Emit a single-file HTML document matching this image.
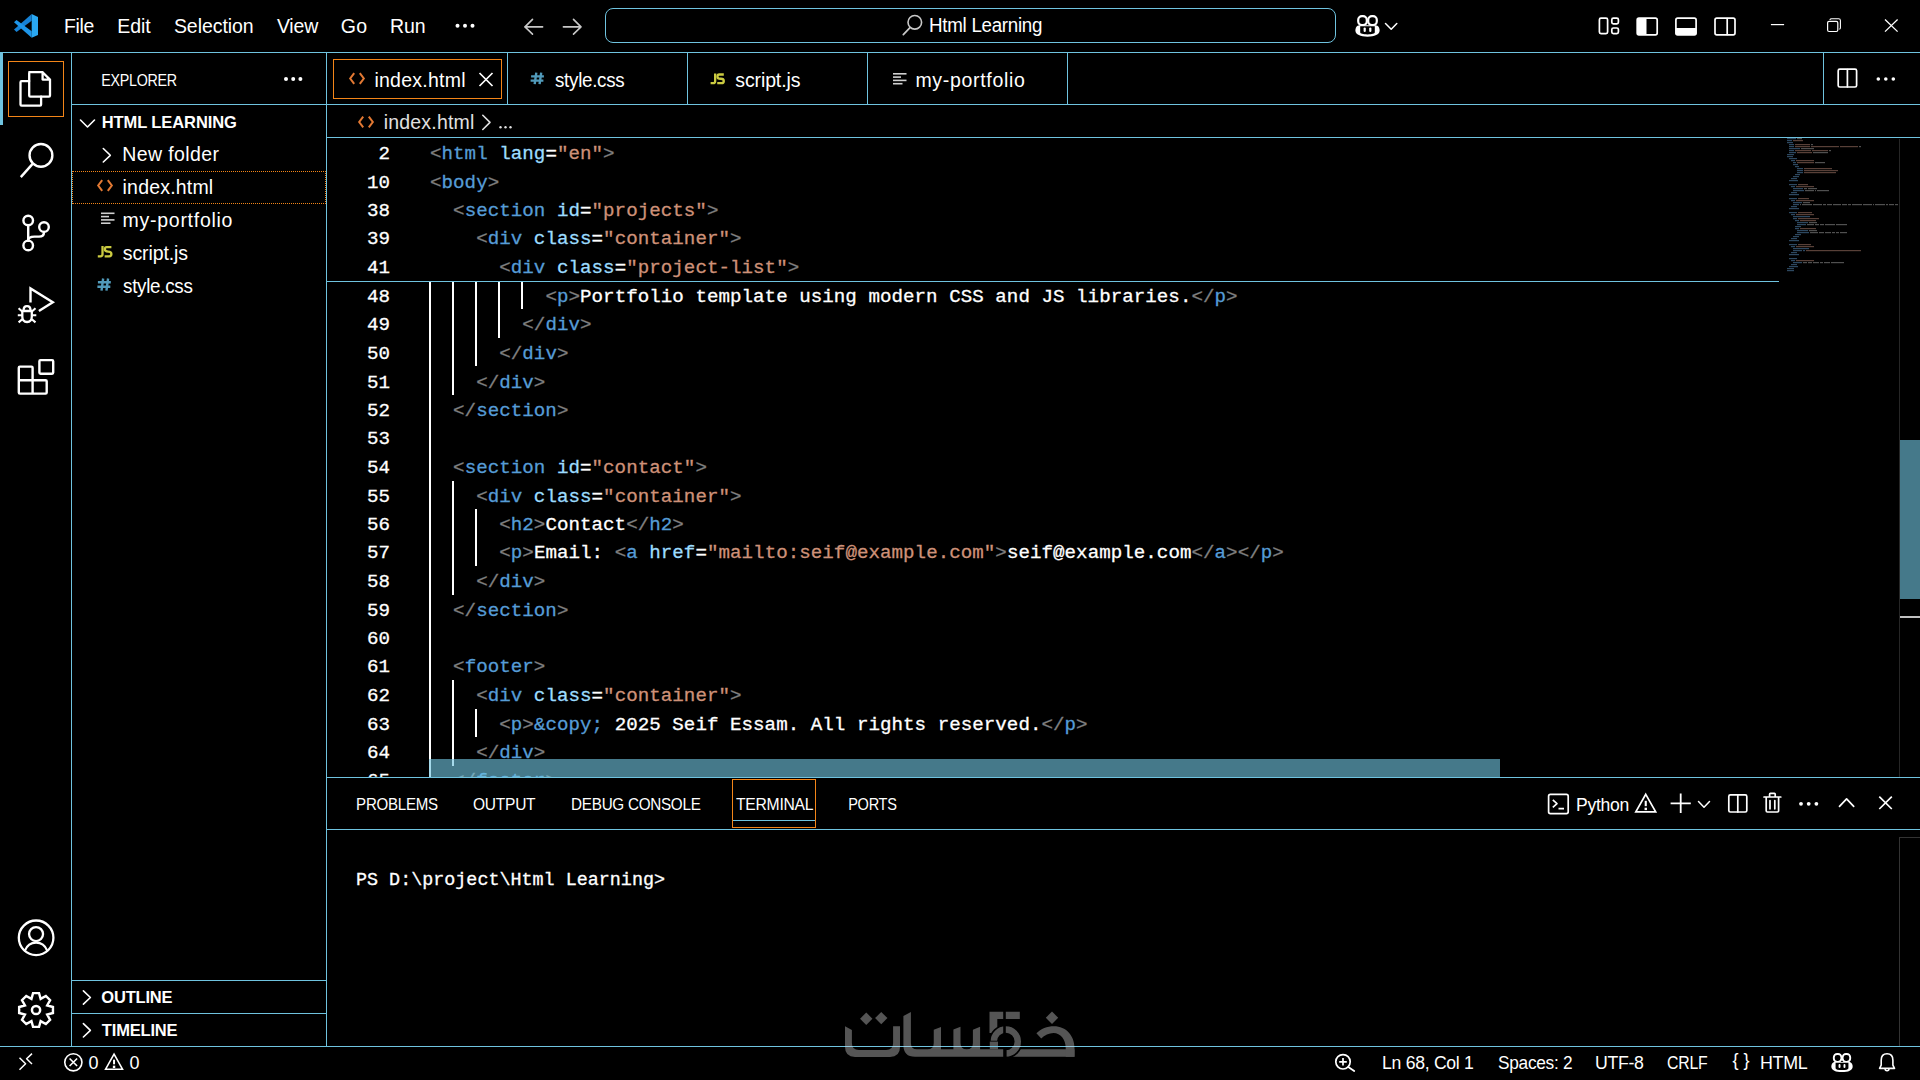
<!DOCTYPE html>
<html><head><meta charset="utf-8"><style>
html,body{margin:0;padding:0;background:#000;width:1920px;height:1080px;overflow:hidden;position:relative}
</style></head><body>
<div style="position:absolute;left:0px;top:52px;width:1920px;height:1px;background:#6FC3DF"></div><div style="position:absolute;left:64.00px;top:17px;font:400 19.5px/19.5px 'Liberation Sans', sans-serif;color:#fff;letter-spacing:-0.300px;white-space:pre;transform:scaleX(0.9944);transform-origin:1.60px 0;">File</div><div style="position:absolute;left:117.15px;top:17px;font:400 19.5px/19.5px 'Liberation Sans', sans-serif;color:#fff;letter-spacing:-0.004px;white-space:pre;">Edit</div><div style="position:absolute;left:173.90px;top:17px;font:400 19.5px/19.5px 'Liberation Sans', sans-serif;color:#fff;letter-spacing:-0.057px;white-space:pre;">Selection</div><div style="position:absolute;left:276.90px;top:17px;font:400 19.5px/19.5px 'Liberation Sans', sans-serif;color:#fff;letter-spacing:-0.182px;white-space:pre;">View</div><div style="position:absolute;left:340.82px;top:17px;font:400 19.5px/19.5px 'Liberation Sans', sans-serif;color:#fff;letter-spacing:0.381px;white-space:pre;">Go</div><div style="position:absolute;left:390.00px;top:17px;font:400 19.5px/19.5px 'Liberation Sans', sans-serif;color:#fff;letter-spacing:-0.098px;white-space:pre;">Run</div><div style="position:absolute;left:605px;top:8px;width:731px;height:35px;border:1px solid #6FC3DF;border-radius:8px;box-sizing:border-box"></div><div style="position:absolute;left:929.30px;top:16px;font:400 19.5px/19.5px 'Liberation Sans', sans-serif;color:#fff;letter-spacing:-0.300px;white-space:pre;transform:scaleX(0.9622);transform-origin:1.60px 0;">Html Learning</div><div style="position:absolute;left:71px;top:53px;width:1px;height:993px;background:#6FC3DF"></div><div style="position:absolute;left:0px;top:52px;width:3px;height:73px;background:#6FC3DF"></div><div style="position:absolute;left:8px;top:61px;width:56px;height:56px;border:1px solid #F38518;box-sizing:border-box"></div><div style="position:absolute;left:326px;top:53px;width:1px;height:993px;background:#6FC3DF"></div><div style="position:absolute;left:101.45px;top:72px;font:400 16.5px/16.5px 'Liberation Sans', sans-serif;color:#fff;letter-spacing:-0.300px;white-space:pre;transform:scaleX(0.8653);transform-origin:1.35px 0;">EXPLORER</div><div style="position:absolute;left:72px;top:104px;width:254px;height:1px;background:#6FC3DF"></div><div style="position:absolute;left:101.69px;top:114px;font:700 16.5px/16.5px 'Liberation Sans', sans-serif;color:#fff;letter-spacing:-0.087px;white-space:pre;">HTML LEARNING</div><div style="position:absolute;left:122.30px;top:145px;font:400 19.5px/19.5px 'Liberation Sans', sans-serif;color:#fff;letter-spacing:0.380px;white-space:pre;">New folder</div><div style="position:absolute;left:72px;top:171px;width:254px;height:33px;border:1px dotted #F38518;box-sizing:border-box"></div><div style="position:absolute;left:122.59px;top:178px;font:400 19.5px/19.5px 'Liberation Sans', sans-serif;color:#fff;letter-spacing:0.195px;white-space:pre;">index.html</div><div style="position:absolute;left:122.61px;top:211px;font:400 19.5px/19.5px 'Liberation Sans', sans-serif;color:#fff;letter-spacing:0.722px;white-space:pre;">my-portfolio</div><div style="position:absolute;left:122.85px;top:244px;font:400 19.5px/19.5px 'Liberation Sans', sans-serif;color:#fff;letter-spacing:-0.117px;white-space:pre;">script.js</div><div style="position:absolute;left:122.85px;top:277px;font:400 19.5px/19.5px 'Liberation Sans', sans-serif;color:#fff;letter-spacing:-0.300px;white-space:pre;transform:scaleX(0.9646);transform-origin:0.55px 0;">style.css</div><div style="position:absolute;left:72px;top:980px;width:254px;height:1px;background:#6FC3DF"></div><div style="position:absolute;left:101.32px;top:989px;font:700 16.5px/16.5px 'Liberation Sans', sans-serif;color:#fff;letter-spacing:-0.200px;white-space:pre;">OUTLINE</div><div style="position:absolute;left:72px;top:1013px;width:254px;height:1px;background:#6FC3DF"></div><div style="position:absolute;left:101.82px;top:1022px;font:700 16.5px/16.5px 'Liberation Sans', sans-serif;color:#fff;letter-spacing:-0.169px;white-space:pre;">TIMELINE</div><div style="position:absolute;left:0px;top:1046px;width:1920px;height:1px;background:#6FC3DF"></div><div style="position:absolute;left:327px;top:104px;width:1593px;height:1px;background:#6FC3DF"></div><div style="position:absolute;left:507px;top:53px;width:1px;height:51px;background:#6FC3DF"></div><div style="position:absolute;left:687px;top:53px;width:1px;height:51px;background:#6FC3DF"></div><div style="position:absolute;left:867px;top:53px;width:1px;height:51px;background:#6FC3DF"></div><div style="position:absolute;left:1067px;top:53px;width:1px;height:51px;background:#6FC3DF"></div><div style="position:absolute;left:1823px;top:53px;width:1px;height:51px;background:#6FC3DF"></div><div style="position:absolute;left:333px;top:59px;width:169px;height:40px;border:1px solid #F38518;box-sizing:border-box"></div><div style="position:absolute;left:374.39px;top:71px;font:400 19.5px/19.5px 'Liberation Sans', sans-serif;color:#fff;letter-spacing:0.261px;white-space:pre;">index.html</div><div style="position:absolute;left:555.35px;top:71px;font:400 19.5px/19.5px 'Liberation Sans', sans-serif;color:#fff;letter-spacing:-0.300px;white-space:pre;transform:scaleX(0.9632);transform-origin:0.55px 0;">style.css</div><div style="position:absolute;left:735.35px;top:71px;font:400 19.5px/19.5px 'Liberation Sans', sans-serif;color:#fff;letter-spacing:-0.130px;white-space:pre;">script.js</div><div style="position:absolute;left:915.41px;top:71px;font:400 19.5px/19.5px 'Liberation Sans', sans-serif;color:#fff;letter-spacing:0.685px;white-space:pre;">my-portfolio</div><div style="position:absolute;left:327px;top:137px;width:1593px;height:1px;background:#6FC3DF"></div><div style="position:absolute;left:383.69px;top:113px;font:400 19.5px/19.5px 'Liberation Sans', sans-serif;color:#e0e0e0;letter-spacing:0.195px;white-space:pre;">index.html</div><div style="position:absolute;left:378.46px;top:145px;font:400 19.17px/19.17px 'Liberation Mono', monospace;color:#fff;letter-spacing:0.000px;white-space:pre;-webkit-text-stroke:0.3px currentColor;">2</div><div style="position:absolute;left:430.00px;top:145px;font:400 19.17px/19.17px 'Liberation Mono', monospace;color:#fff;letter-spacing:0.040px;white-space:pre;-webkit-text-stroke:0.3px currentColor;"><span style="color:#808080">&lt;</span><span style="color:#569CD6">html</span><span style="color:#FFFFFF"> </span><span style="color:#9CDCFE">lang</span><span style="color:#FFFFFF">=</span><span style="color:#CE9178">&quot;en&quot;</span><span style="color:#808080">&gt;</span></div><div style="position:absolute;left:366.92px;top:174px;font:400 19.17px/19.17px 'Liberation Mono', monospace;color:#fff;letter-spacing:0.000px;white-space:pre;-webkit-text-stroke:0.3px currentColor;">10</div><div style="position:absolute;left:430.00px;top:174px;font:400 19.17px/19.17px 'Liberation Mono', monospace;color:#fff;letter-spacing:0.040px;white-space:pre;-webkit-text-stroke:0.3px currentColor;"><span style="color:#808080">&lt;</span><span style="color:#569CD6">body</span><span style="color:#808080">&gt;</span></div><div style="position:absolute;left:366.92px;top:202px;font:400 19.17px/19.17px 'Liberation Mono', monospace;color:#fff;letter-spacing:0.000px;white-space:pre;-webkit-text-stroke:0.3px currentColor;">38</div><div style="position:absolute;left:453.08px;top:202px;font:400 19.17px/19.17px 'Liberation Mono', monospace;color:#fff;letter-spacing:0.040px;white-space:pre;-webkit-text-stroke:0.3px currentColor;"><span style="color:#808080">&lt;</span><span style="color:#569CD6">section</span><span style="color:#FFFFFF"> </span><span style="color:#9CDCFE">id</span><span style="color:#FFFFFF">=</span><span style="color:#CE9178">&quot;projects&quot;</span><span style="color:#808080">&gt;</span></div><div style="position:absolute;left:366.92px;top:230px;font:400 19.17px/19.17px 'Liberation Mono', monospace;color:#fff;letter-spacing:0.000px;white-space:pre;-webkit-text-stroke:0.3px currentColor;">39</div><div style="position:absolute;left:476.16px;top:230px;font:400 19.17px/19.17px 'Liberation Mono', monospace;color:#fff;letter-spacing:0.040px;white-space:pre;-webkit-text-stroke:0.3px currentColor;"><span style="color:#808080">&lt;</span><span style="color:#569CD6">div</span><span style="color:#FFFFFF"> </span><span style="color:#9CDCFE">class</span><span style="color:#FFFFFF">=</span><span style="color:#CE9178">&quot;container&quot;</span><span style="color:#808080">&gt;</span></div><div style="position:absolute;left:366.92px;top:259px;font:400 19.17px/19.17px 'Liberation Mono', monospace;color:#fff;letter-spacing:0.000px;white-space:pre;-webkit-text-stroke:0.3px currentColor;">41</div><div style="position:absolute;left:499.24px;top:259px;font:400 19.17px/19.17px 'Liberation Mono', monospace;color:#fff;letter-spacing:0.040px;white-space:pre;-webkit-text-stroke:0.3px currentColor;"><span style="color:#808080">&lt;</span><span style="color:#569CD6">div</span><span style="color:#FFFFFF"> </span><span style="color:#9CDCFE">class</span><span style="color:#FFFFFF">=</span><span style="color:#CE9178">&quot;project-list&quot;</span><span style="color:#808080">&gt;</span></div><div style="position:absolute;left:327px;top:281px;width:1452px;height:1px;background:#6FC3DF"></div><div style="position:absolute;left:0;top:282px;width:1920px;height:495px;overflow:hidden"><div style="position:absolute;left:0;top:-282px;width:1920px;height:1080px"><div style="position:absolute;left:366.92px;top:288px;font:400 19.17px/19.17px 'Liberation Mono', monospace;color:#fff;letter-spacing:0.000px;white-space:pre;-webkit-text-stroke:0.3px currentColor;">48</div><div style="position:absolute;left:545.40px;top:288px;font:400 19.17px/19.17px 'Liberation Mono', monospace;color:#fff;letter-spacing:0.040px;white-space:pre;-webkit-text-stroke:0.3px currentColor;"><span style="color:#808080">&lt;</span><span style="color:#569CD6">p</span><span style="color:#808080">&gt;</span><span style="color:#FFFFFF">Portfolio template using modern CSS and JS libraries.</span><span style="color:#808080">&lt;/</span><span style="color:#569CD6">p</span><span style="color:#808080">&gt;</span></div><div style="position:absolute;left:366.92px;top:316px;font:400 19.17px/19.17px 'Liberation Mono', monospace;color:#fff;letter-spacing:0.000px;white-space:pre;-webkit-text-stroke:0.3px currentColor;">49</div><div style="position:absolute;left:522.32px;top:316px;font:400 19.17px/19.17px 'Liberation Mono', monospace;color:#fff;letter-spacing:0.040px;white-space:pre;-webkit-text-stroke:0.3px currentColor;"><span style="color:#808080">&lt;/</span><span style="color:#569CD6">div</span><span style="color:#808080">&gt;</span></div><div style="position:absolute;left:366.92px;top:345px;font:400 19.17px/19.17px 'Liberation Mono', monospace;color:#fff;letter-spacing:0.000px;white-space:pre;-webkit-text-stroke:0.3px currentColor;">50</div><div style="position:absolute;left:499.24px;top:345px;font:400 19.17px/19.17px 'Liberation Mono', monospace;color:#fff;letter-spacing:0.040px;white-space:pre;-webkit-text-stroke:0.3px currentColor;"><span style="color:#808080">&lt;/</span><span style="color:#569CD6">div</span><span style="color:#808080">&gt;</span></div><div style="position:absolute;left:366.92px;top:374px;font:400 19.17px/19.17px 'Liberation Mono', monospace;color:#fff;letter-spacing:0.000px;white-space:pre;-webkit-text-stroke:0.3px currentColor;">51</div><div style="position:absolute;left:476.16px;top:374px;font:400 19.17px/19.17px 'Liberation Mono', monospace;color:#fff;letter-spacing:0.040px;white-space:pre;-webkit-text-stroke:0.3px currentColor;"><span style="color:#808080">&lt;/</span><span style="color:#569CD6">div</span><span style="color:#808080">&gt;</span></div><div style="position:absolute;left:366.92px;top:402px;font:400 19.17px/19.17px 'Liberation Mono', monospace;color:#fff;letter-spacing:0.000px;white-space:pre;-webkit-text-stroke:0.3px currentColor;">52</div><div style="position:absolute;left:453.08px;top:402px;font:400 19.17px/19.17px 'Liberation Mono', monospace;color:#fff;letter-spacing:0.040px;white-space:pre;-webkit-text-stroke:0.3px currentColor;"><span style="color:#808080">&lt;/</span><span style="color:#569CD6">section</span><span style="color:#808080">&gt;</span></div><div style="position:absolute;left:366.92px;top:430px;font:400 19.17px/19.17px 'Liberation Mono', monospace;color:#fff;letter-spacing:0.000px;white-space:pre;-webkit-text-stroke:0.3px currentColor;">53</div><div style="position:absolute;left:366.92px;top:459px;font:400 19.17px/19.17px 'Liberation Mono', monospace;color:#fff;letter-spacing:0.000px;white-space:pre;-webkit-text-stroke:0.3px currentColor;">54</div><div style="position:absolute;left:453.08px;top:459px;font:400 19.17px/19.17px 'Liberation Mono', monospace;color:#fff;letter-spacing:0.040px;white-space:pre;-webkit-text-stroke:0.3px currentColor;"><span style="color:#808080">&lt;</span><span style="color:#569CD6">section</span><span style="color:#FFFFFF"> </span><span style="color:#9CDCFE">id</span><span style="color:#FFFFFF">=</span><span style="color:#CE9178">&quot;contact&quot;</span><span style="color:#808080">&gt;</span></div><div style="position:absolute;left:366.92px;top:488px;font:400 19.17px/19.17px 'Liberation Mono', monospace;color:#fff;letter-spacing:0.000px;white-space:pre;-webkit-text-stroke:0.3px currentColor;">55</div><div style="position:absolute;left:476.16px;top:488px;font:400 19.17px/19.17px 'Liberation Mono', monospace;color:#fff;letter-spacing:0.040px;white-space:pre;-webkit-text-stroke:0.3px currentColor;"><span style="color:#808080">&lt;</span><span style="color:#569CD6">div</span><span style="color:#FFFFFF"> </span><span style="color:#9CDCFE">class</span><span style="color:#FFFFFF">=</span><span style="color:#CE9178">&quot;container&quot;</span><span style="color:#808080">&gt;</span></div><div style="position:absolute;left:366.92px;top:516px;font:400 19.17px/19.17px 'Liberation Mono', monospace;color:#fff;letter-spacing:0.000px;white-space:pre;-webkit-text-stroke:0.3px currentColor;">56</div><div style="position:absolute;left:499.24px;top:516px;font:400 19.17px/19.17px 'Liberation Mono', monospace;color:#fff;letter-spacing:0.040px;white-space:pre;-webkit-text-stroke:0.3px currentColor;"><span style="color:#808080">&lt;</span><span style="color:#569CD6">h2</span><span style="color:#808080">&gt;</span><span style="color:#FFFFFF">Contact</span><span style="color:#808080">&lt;/</span><span style="color:#569CD6">h2</span><span style="color:#808080">&gt;</span></div><div style="position:absolute;left:366.92px;top:544px;font:400 19.17px/19.17px 'Liberation Mono', monospace;color:#fff;letter-spacing:0.000px;white-space:pre;-webkit-text-stroke:0.3px currentColor;">57</div><div style="position:absolute;left:499.24px;top:544px;font:400 19.17px/19.17px 'Liberation Mono', monospace;color:#fff;letter-spacing:0.040px;white-space:pre;-webkit-text-stroke:0.3px currentColor;"><span style="color:#808080">&lt;</span><span style="color:#569CD6">p</span><span style="color:#808080">&gt;</span><span style="color:#FFFFFF">Email: </span><span style="color:#808080">&lt;</span><span style="color:#569CD6">a</span><span style="color:#FFFFFF"> </span><span style="color:#9CDCFE">href</span><span style="color:#FFFFFF">=</span><span style="color:#CE9178">&quot;mailto:seif@example.com&quot;</span><span style="color:#808080">&gt;</span><span style="color:#FFFFFF">seif@example.com</span><span style="color:#808080">&lt;/</span><span style="color:#569CD6">a</span><span style="color:#808080">&gt;</span><span style="color:#808080">&lt;/</span><span style="color:#569CD6">p</span><span style="color:#808080">&gt;</span></div><div style="position:absolute;left:366.92px;top:573px;font:400 19.17px/19.17px 'Liberation Mono', monospace;color:#fff;letter-spacing:0.000px;white-space:pre;-webkit-text-stroke:0.3px currentColor;">58</div><div style="position:absolute;left:476.16px;top:573px;font:400 19.17px/19.17px 'Liberation Mono', monospace;color:#fff;letter-spacing:0.040px;white-space:pre;-webkit-text-stroke:0.3px currentColor;"><span style="color:#808080">&lt;/</span><span style="color:#569CD6">div</span><span style="color:#808080">&gt;</span></div><div style="position:absolute;left:366.92px;top:602px;font:400 19.17px/19.17px 'Liberation Mono', monospace;color:#fff;letter-spacing:0.000px;white-space:pre;-webkit-text-stroke:0.3px currentColor;">59</div><div style="position:absolute;left:453.08px;top:602px;font:400 19.17px/19.17px 'Liberation Mono', monospace;color:#fff;letter-spacing:0.040px;white-space:pre;-webkit-text-stroke:0.3px currentColor;"><span style="color:#808080">&lt;/</span><span style="color:#569CD6">section</span><span style="color:#808080">&gt;</span></div><div style="position:absolute;left:366.92px;top:630px;font:400 19.17px/19.17px 'Liberation Mono', monospace;color:#fff;letter-spacing:0.000px;white-space:pre;-webkit-text-stroke:0.3px currentColor;">60</div><div style="position:absolute;left:366.92px;top:658px;font:400 19.17px/19.17px 'Liberation Mono', monospace;color:#fff;letter-spacing:0.000px;white-space:pre;-webkit-text-stroke:0.3px currentColor;">61</div><div style="position:absolute;left:453.08px;top:658px;font:400 19.17px/19.17px 'Liberation Mono', monospace;color:#fff;letter-spacing:0.040px;white-space:pre;-webkit-text-stroke:0.3px currentColor;"><span style="color:#808080">&lt;</span><span style="color:#569CD6">footer</span><span style="color:#808080">&gt;</span></div><div style="position:absolute;left:366.92px;top:687px;font:400 19.17px/19.17px 'Liberation Mono', monospace;color:#fff;letter-spacing:0.000px;white-space:pre;-webkit-text-stroke:0.3px currentColor;">62</div><div style="position:absolute;left:476.16px;top:687px;font:400 19.17px/19.17px 'Liberation Mono', monospace;color:#fff;letter-spacing:0.040px;white-space:pre;-webkit-text-stroke:0.3px currentColor;"><span style="color:#808080">&lt;</span><span style="color:#569CD6">div</span><span style="color:#FFFFFF"> </span><span style="color:#9CDCFE">class</span><span style="color:#FFFFFF">=</span><span style="color:#CE9178">&quot;container&quot;</span><span style="color:#808080">&gt;</span></div><div style="position:absolute;left:366.92px;top:716px;font:400 19.17px/19.17px 'Liberation Mono', monospace;color:#fff;letter-spacing:0.000px;white-space:pre;-webkit-text-stroke:0.3px currentColor;">63</div><div style="position:absolute;left:499.24px;top:716px;font:400 19.17px/19.17px 'Liberation Mono', monospace;color:#fff;letter-spacing:0.040px;white-space:pre;-webkit-text-stroke:0.3px currentColor;"><span style="color:#808080">&lt;</span><span style="color:#569CD6">p</span><span style="color:#808080">&gt;</span><span style="color:#569CD6">&amp;copy;</span><span style="color:#FFFFFF"> 2025 Seif Essam. All rights reserved.</span><span style="color:#808080">&lt;/</span><span style="color:#569CD6">p</span><span style="color:#808080">&gt;</span></div><div style="position:absolute;left:366.92px;top:744px;font:400 19.17px/19.17px 'Liberation Mono', monospace;color:#fff;letter-spacing:0.000px;white-space:pre;-webkit-text-stroke:0.3px currentColor;">64</div><div style="position:absolute;left:476.16px;top:744px;font:400 19.17px/19.17px 'Liberation Mono', monospace;color:#fff;letter-spacing:0.040px;white-space:pre;-webkit-text-stroke:0.3px currentColor;"><span style="color:#808080">&lt;/</span><span style="color:#569CD6">div</span><span style="color:#808080">&gt;</span></div><div style="position:absolute;left:366.92px;top:772px;font:400 19.17px/19.17px 'Liberation Mono', monospace;color:#fff;letter-spacing:0.000px;white-space:pre;-webkit-text-stroke:0.3px currentColor;">65</div><div style="position:absolute;left:453.08px;top:772px;font:400 19.17px/19.17px 'Liberation Mono', monospace;color:#fff;letter-spacing:0.040px;white-space:pre;-webkit-text-stroke:0.3px currentColor;"><span style="color:#808080">&lt;/</span><span style="color:#569CD6">footer</span><span style="color:#808080">&gt;</span></div><div style="position:absolute;left:429.25px;top:282px;width:1.5px;height:495px;background:#fff"></div><div style="position:absolute;left:452.25px;top:282px;width:1.5px;height:113px;background:#fff"></div><div style="position:absolute;left:475.25px;top:282px;width:1.5px;height:84px;background:#fff"></div><div style="position:absolute;left:498.25px;top:282px;width:1.5px;height:56px;background:#fff"></div><div style="position:absolute;left:521.25px;top:282px;width:1.5px;height:27px;background:#fff"></div><div style="position:absolute;left:452.25px;top:481px;width:1.5px;height:114px;background:#fff"></div><div style="position:absolute;left:475.25px;top:509px;width:1.5px;height:57px;background:#fff"></div><div style="position:absolute;left:452.25px;top:680px;width:1.5px;height:86px;background:#fff"></div><div style="position:absolute;left:475.25px;top:709px;width:1.5px;height:28px;background:#fff"></div></div></div><div style="position:absolute;left:429px;top:759px;width:1071px;height:18px;background:rgba(111,195,223,0.62)"></div><div style="position:absolute;left:1899px;top:440px;width:21px;height:159px;background:rgba(111,195,223,0.62)"></div><div style="position:absolute;left:1900px;top:616px;width:20px;height:2px;background:#c0c0c0"></div><div style="position:absolute;left:1899px;top:139px;width:1px;height:638px;background:#262626"></div><div style="position:absolute;left:1899px;top:837px;width:1px;height:209px;background:#333333"></div><div style="position:absolute;left:1899px;top:837px;width:21px;height:1px;background:#333333"></div><div style="position:absolute;left:327px;top:777px;width:1593px;height:1px;background:#6FC3DF"></div><div style="position:absolute;left:356.15px;top:796px;font:400 16.5px/16.5px 'Liberation Sans', sans-serif;color:#fff;letter-spacing:-0.300px;white-space:pre;transform:scaleX(0.9145);transform-origin:1.35px 0;">PROBLEMS</div><div style="position:absolute;left:472.97px;top:796px;font:400 16.5px/16.5px 'Liberation Sans', sans-serif;color:#fff;letter-spacing:-0.300px;white-space:pre;transform:scaleX(0.9428);transform-origin:0.78px 0;">OUTPUT</div><div style="position:absolute;left:570.55px;top:796px;font:400 16.5px/16.5px 'Liberation Sans', sans-serif;color:#fff;letter-spacing:-0.300px;white-space:pre;transform:scaleX(0.9242);transform-origin:1.35px 0;">DEBUG CONSOLE</div><div style="position:absolute;left:735.54px;top:796px;font:400 16.5px/16.5px 'Liberation Sans', sans-serif;color:#fff;letter-spacing:-0.300px;white-space:pre;transform:scaleX(0.9525);transform-origin:0.36px 0;">TERMINAL</div><div style="position:absolute;left:847.85px;top:796px;font:400 16.5px/16.5px 'Liberation Sans', sans-serif;color:#fff;letter-spacing:-0.300px;white-space:pre;transform:scaleX(0.8810);transform-origin:1.35px 0;">PORTS</div><div style="position:absolute;left:732px;top:779px;width:84px;height:49px;border:1px solid #F38518;box-sizing:border-box"></div><div style="position:absolute;left:733px;top:820px;width:82px;height:1px;background:#6FC3DF"></div><div style="position:absolute;left:327px;top:829px;width:1593px;height:1px;background:#6FC3DF"></div><div style="position:absolute;left:356.00px;top:872px;font:400 18.4px/18.4px 'Liberation Mono', monospace;color:#fff;letter-spacing:0.000px;white-space:pre;-webkit-text-stroke:0.3px currentColor;">PS D:\project\Html Learning&gt;</div><div style="position:absolute;left:1575.52px;top:796px;font:400 18px/18px 'Liberation Sans', sans-serif;color:#fff;letter-spacing:-0.300px;white-space:pre;transform:scaleX(0.9752);transform-origin:1.48px 0;">Python</div><div style="position:absolute;left:1381.52px;top:1054px;font:400 18px/18px 'Liberation Sans', sans-serif;color:#fff;letter-spacing:-0.300px;white-space:pre;transform:scaleX(0.9792);transform-origin:1.48px 0;">Ln 68, Col 1</div><div style="position:absolute;left:1497.92px;top:1054px;font:400 18px/18px 'Liberation Sans', sans-serif;color:#fff;letter-spacing:-0.300px;white-space:pre;transform:scaleX(0.9596);transform-origin:0.83px 0;">Spaces: 2</div><div style="position:absolute;left:1595.21px;top:1054px;font:400 18px/18px 'Liberation Sans', sans-serif;color:#fff;letter-spacing:-0.300px;white-space:pre;transform:scaleX(0.9825);transform-origin:1.39px 0;">UTF-8</div><div style="position:absolute;left:1666.58px;top:1054px;font:400 18px/18px 'Liberation Sans', sans-serif;color:#fff;letter-spacing:-0.300px;white-space:pre;transform:scaleX(0.8791);transform-origin:0.92px 0;">CRLF</div><div style="position:absolute;left:1759.77px;top:1054px;font:400 18px/18px 'Liberation Sans', sans-serif;color:#fff;letter-spacing:-0.300px;white-space:pre;transform:scaleX(0.9918);transform-origin:1.48px 0;">HTML</div><div style="position:absolute;left:88.50px;top:1054px;font:400 18px/18px 'Liberation Sans', sans-serif;color:#fff;letter-spacing:0.000px;white-space:pre;">0</div><div style="position:absolute;left:129.50px;top:1054px;font:400 18px/18px 'Liberation Sans', sans-serif;color:#fff;letter-spacing:0.000px;white-space:pre;">0</div><div style="position:absolute;left:1732.5px;top:1051px;font:400 18px/18px 'Liberation Sans', sans-serif;color:#fff;letter-spacing:5px">{}</div>
<svg style="position:absolute;left:0;top:0" width="1920" height="1080" viewBox="0 0 1920 1080" fill="none" stroke="#fff" stroke-width="2.2" stroke-linecap="round" stroke-linejoin="round">
<circle cx="457.5" cy="25.8" r="2" fill="#fff" stroke="none"/><circle cx="465" cy="25.8" r="2" fill="#fff" stroke="none"/><circle cx="472.5" cy="25.8" r="2" fill="#fff" stroke="none"/><circle cx="286" cy="78.9" r="2" fill="#fff" stroke="none"/><circle cx="293.2" cy="78.9" r="2" fill="#fff" stroke="none"/><circle cx="300.4" cy="78.9" r="2" fill="#fff" stroke="none"/><path d="M31.7 14 L38 17 V35 L31.7 37.8 Z" fill="#2AA8F2" stroke="none" /><path d="M14 29.6 L16.5 31.9 L31.7 20.8 V14 Z" fill="#1681D4" stroke="none" /><path d="M14 22.3 L16.5 20.1 L31.7 31.3 V37.8 Z" fill="#1E95E8" stroke="none" /><path d="M542.6 26.9 H524.8 M532.5 19.4 L525 26.9 L532.5 34.1" stroke="#c8c8c8" stroke-width="1.6" /><path d="M563.4 26.9 H581 M573.5 19.4 L581 26.9 L573.5 34.1" stroke="#c8c8c8" stroke-width="1.6" /><circle cx="914.8" cy="22.3" r="6.8" stroke="#c8c8c8" stroke-width="1.6"/><path d="M910 27.6 L903.3 34.7" stroke="#c8c8c8" stroke-width="1.7" /><rect x="1358.20" y="16.10" width="8.60" height="9.00" rx="3.80" stroke="#fff" stroke-width="2.2"/><rect x="1368.20" y="16.10" width="8.60" height="9.00" rx="3.80" stroke="#fff" stroke-width="2.2"/><path d="M1359.50 25.20 H1375.50 C1378.50 25.20 1379.60 28.00 1379.60 30.50 C1379.60 34.50 1374.50 36.70 1367.50 36.70 C1360.50 36.70 1355.40 34.50 1355.40 30.50 C1355.40 28.00 1356.50 25.20 1359.50 25.20 Z" fill="#fff" stroke="none" /><path d="M1360.20 26.20 H1374.80 V32.30 C1374.80 33.80 1372.00 34.40 1367.50 34.40 C1363.00 34.40 1360.20 33.80 1360.20 32.30 Z" fill="#000" stroke="none" /><rect x="1363.60" y="27.40" width="2.20" height="4.60" rx="1.10" fill="#fff" stroke="none"/><rect x="1369.20" y="27.40" width="2.20" height="4.60" rx="1.10" fill="#fff" stroke="none"/><path d="M1385.5 23.5 L1391.2 29.3 L1396.8 23.5" stroke="#fff" stroke-width="1.5" /><rect x="1599.4" y="18.2" width="8.2" height="15.4" rx="1.6" stroke="#fff" stroke-width="1.7"/><rect x="1611.8" y="18.2" width="6.6" height="5.6" rx="1.6" stroke="#fff" stroke-width="1.7"/><rect x="1611.8" y="28" width="6.6" height="5.6" rx="1.6" stroke="#fff" stroke-width="1.7"/><rect x="1637.2" y="18.2" width="20" height="16.6" rx="1.8" stroke="#fff" stroke-width="1.7"/><path d="M1637 19.5 Q1637 18 1638.5 18 H1646.5 V35 H1638.5 Q1637 35 1637 33.5 Z" fill="#fff" stroke="none" /><rect x="1675.9" y="18.2" width="20.2" height="16.6" rx="1.8" stroke="#fff" stroke-width="1.7"/><path d="M1675.7 28 H1696.3 V33.5 Q1696.3 35 1694.8 35 H1677.2 Q1675.7 35 1675.7 33.5 Z" fill="#fff" stroke="none" /><rect x="1715" y="18.2" width="20" height="16.6" rx="1.8" stroke="#fff" stroke-width="1.7"/><path d="M1727.2 18.5 V34.5" stroke="#fff" stroke-width="1.7" /><path d="M1770.9 24.6 H1784.1" stroke="#fff" stroke-width="1.2" stroke-linecap="butt"/><rect x="1827.6" y="21.3" width="10.2" height="10.2" rx="1.5" stroke="#fff" stroke-width="1.2"/><path d="M1830 19.4 Q1830.3 18.8 1831.5 18.8 H1838.6 Q1840.4 18.8 1840.4 20.6 V27.8 Q1840.4 28.8 1839.8 29.1" stroke="#fff" stroke-width="1.1" /><path d="M1885 19.5 L1897.6 31.6 M1897.6 19.5 L1885 31.6" stroke="#fff" stroke-width="1.3" stroke-linecap="butt"/><path d="M29.2 72.2 H42.6 L50 79.6 V95.6 Q50 96.7 48.9 96.7 H30.3 Q29.2 96.7 29.2 95.6 V73.3 Q29.2 72.2 30.3 72.2 Z M42.6 72.2 V79.6 H50" stroke="#fff" stroke-width="2.3" /><path d="M29.2 81.1 H21.6 Q20.5 81.1 20.5 82.2 V104.5 Q20.5 105.6 21.6 105.6 H40 Q41.1 105.6 41.1 104.5 V96.7" stroke="#fff" stroke-width="2.3" /><circle cx="40.95" cy="155.4" r="11.4" stroke="#fff" stroke-width="2.4"/><path d="M32.6 163.9 L20.8 177.1" stroke="#fff" stroke-width="2.4" stroke-linecap="butt"/><circle cx="28.2" cy="220.5" r="4.8" stroke="#fff" stroke-width="2.4"/><circle cx="44" cy="227.1" r="4.8" stroke="#fff" stroke-width="2.4"/><circle cx="28.2" cy="245.4" r="4.8" stroke="#fff" stroke-width="2.4"/><path d="M28.2 225.3 V240.6" stroke="#fff" stroke-width="2.4" /><path d="M44 231.9 C44 235.3 42 236.6 39 236.6 H34.5 C31 236.6 28.2 238 28.2 240.6" stroke="#fff" stroke-width="2.4" /><path d="M30.5 302.6 V288.4 L52.8 302.2 L38.9 311" stroke="#fff" stroke-width="2.4" stroke-linecap="butt" stroke-linejoin="miter"/><path d="M23.6 310.5 C23.6 307.6 25 306.2 27 306.2 C29 306.2 30.5 307.6 30.5 310.5" stroke="#fff" stroke-width="2.3" /><path d="M22.3 311 H31.8 V316.5 C31.8 320 30 322 27.05 322 C24.1 322 22.3 320 22.3 316.5 Z" stroke="#fff" stroke-width="2.3" /><path d="M18.6 308.3 L22.2 311.6 M35.5 308.3 L31.9 311.6 M17.8 315.2 H22 M32.1 315.2 H36.3 M18.6 322.4 L22.3 319.2 M35.5 322.4 L31.8 319.2" stroke="#fff" stroke-width="2.1" stroke-linecap="butt"/><path d="M18.8 367.7 Q18.8 366.6 19.9 366.6 H31.5 Q32.6 366.6 32.6 367.7 V380.2 H45.6 Q46.7 380.2 46.7 381.3 V392.5 Q46.7 393.6 45.6 393.6 H19.9 Q18.8 393.6 18.8 392.5 Z M18.8 380.2 H32.6 V393.6" stroke="#fff" stroke-width="2.4" /><rect x="39.4" y="360.1" width="13.8" height="13.6" rx="1.1" stroke="#fff" stroke-width="2.4"/><circle cx="36.1" cy="937.8" r="17.3" stroke="#fff" stroke-width="2.3"/><circle cx="36.05" cy="934.1" r="7" stroke="#fff" stroke-width="2.3"/><path d="M24.9 950.6 C27 945.3 31 942.6 36.05 942.6 C41.1 942.6 45.1 945.3 47.2 950.6" stroke="#fff" stroke-width="2.3" /><path d="M31.46 998.91 L33.05 993.10 L39.05 993.10 L40.64 998.91 L45.88 995.93 L50.12 1000.17 L47.14 1005.41 L52.95 1007.00 L52.95 1013.00 L47.14 1014.59 L50.12 1019.83 L45.88 1024.07 L40.64 1021.09 L39.05 1026.90 L33.05 1026.90 L31.46 1021.09 L26.22 1024.07 L21.98 1019.83 L24.96 1014.59 L19.15 1013.00 L19.15 1007.00 L24.96 1005.41 L21.98 1000.17 L26.22 995.93 Z" stroke="#fff" stroke-width="2.4" stroke-linejoin="miter"/><circle cx="36.05" cy="1010.0" r="4.1" stroke="#fff" stroke-width="2.5"/><path d="M80.5 120 L87.5 127 L94.5 120" stroke="#fff" stroke-width="1.6" /><path d="M103.3 148.5 L110.3 155.3 L103.3 162" stroke="#fff" stroke-width="1.6" /><path d="M83.4 990.8 L90.4 997.5 L83.4 1004.2" stroke="#fff" stroke-width="1.6" /><path d="M83.4 1023.6 L90.4 1030.3 L83.4 1037" stroke="#fff" stroke-width="1.6" /><path d="M102.2 180.2 L98.2 185.5 L102.2 190.8 M107.8 180.2 L111.8 185.5 L107.8 190.8" stroke="#E37933" stroke-width="2.0" stroke-linecap="butt" stroke-linejoin="miter"/><path d="M354.2 73.2 L350.2 78.5 L354.2 83.8 M359.8 73.2 L363.8 78.5 L359.8 83.8" stroke="#E37933" stroke-width="2.0" stroke-linecap="butt" stroke-linejoin="miter"/><path d="M363.2 116.7 L359.2 122.0 L363.2 127.3 M368.8 116.7 L372.8 122.0 L368.8 127.3" stroke="#E37933" stroke-width="2.0" stroke-linecap="butt" stroke-linejoin="miter"/><rect x="101" y="212.50" width="13.5" height="1.6" fill="#d0d0d0" stroke="none"/><rect x="101" y="215.80" width="8" height="1.6" fill="#d0d0d0" stroke="none"/><rect x="101" y="219.10" width="13.5" height="1.6" fill="#d0d0d0" stroke="none"/><rect x="101" y="222.40" width="9.5" height="1.6" fill="#d0d0d0" stroke="none"/><rect x="893" y="73.00" width="13.5" height="1.6" fill="#d0d0d0" stroke="none"/><rect x="893" y="76.30" width="8" height="1.6" fill="#d0d0d0" stroke="none"/><rect x="893" y="79.60" width="13.5" height="1.6" fill="#d0d0d0" stroke="none"/><rect x="893" y="82.90" width="9.5" height="1.6" fill="#d0d0d0" stroke="none"/><path d="M102.51 246.10 V254.30 Q102.51 256.30 100.31 256.30 H97.80" stroke="#CBCB41" stroke-width="2.3" stroke-linecap="butt" stroke-linejoin="miter"/><path d="M111.40 247.10 H106.65 Q104.85 247.10 104.85 249.30 Q104.85 251.60 108.15 251.60 Q111.40 251.60 111.40 254.10 Q111.40 256.30 109.20 256.30 H104.65" stroke="#CBCB41" stroke-width="2.3" stroke-linecap="butt" stroke-linejoin="miter"/><path d="M715.16 73.50 V81.20 Q715.16 83.20 712.96 83.20 H710.60" stroke="#CBCB41" stroke-width="2.3" stroke-linecap="butt" stroke-linejoin="miter"/><path d="M723.80 74.50 H719.25 Q717.45 74.50 717.45 76.70 Q717.45 78.75 720.75 78.75 Q723.80 78.75 723.80 81.00 Q723.80 83.20 721.60 83.20 H717.25" stroke="#CBCB41" stroke-width="2.3" stroke-linecap="butt" stroke-linejoin="miter"/><path d="M103.15 278.50 L101.51 290.60 M108.09 278.50 L106.44 290.60 M97.90 282.32 H110.80 M97.40 286.78 H110.30" stroke="#519ABA" stroke-width="2.4" stroke-linecap="butt"/><path d="M536.31 72.70 L534.68 84.20 M541.21 72.70 L539.58 84.20 M531.10 76.33 H543.90 M530.60 80.58 H543.40" stroke="#519ABA" stroke-width="2.4" stroke-linecap="butt"/><path d="M479.5 73 L492.5 86 M492.5 73 L479.5 86" stroke="#fff" stroke-width="1.7" stroke-linecap="butt"/><rect x="1838.2" y="69.2" width="18.4" height="17.8" rx="1.6" stroke="#fff" stroke-width="1.7"/><path d="M1847.4 69.5 V86.8" stroke="#fff" stroke-width="1.7" /><circle cx="1878.3" cy="79" r="1.8" fill="#fff" stroke="none"/><circle cx="1885.8" cy="79" r="1.8" fill="#fff" stroke="none"/><circle cx="1893.3" cy="79" r="1.8" fill="#fff" stroke="none"/><path d="M482.8 115.3 L490 122.4 L482.8 129.5" stroke="#e0e0e0" stroke-width="1.6" /><circle cx="500.5" cy="127.3" r="1.2" fill="#e0e0e0" stroke="none"/><circle cx="505.5" cy="127.3" r="1.2" fill="#e0e0e0" stroke="none"/><circle cx="510.5" cy="127.3" r="1.2" fill="#e0e0e0" stroke="none"/><rect x="1548.6" y="794.4" width="19.6" height="19.2" rx="1.8" stroke="#fff" stroke-width="1.7"/><path d="M1552.8 799.8 L1557 803.6 L1552.8 807.4 M1558.5 808.6 H1564" stroke="#fff" stroke-width="1.6" stroke-linecap="butt"/><path d="M1645.75 794.30 L1655.70 811.90 H1635.80 Z" stroke="#fff" stroke-width="1.7" stroke-linejoin="miter"/><path d="M1645.75 800.80 V806.17" stroke="#fff" stroke-width="2.1" stroke-linecap="butt"/><rect x="1644.55" y="807.71" width="2.4" height="2.4" fill="#fff" stroke="none"/><path d="M1680.7 793.5 V813.1 M1670.6 803.3 H1690.8" stroke="#fff" stroke-width="1.8" stroke-linecap="butt"/><path d="M1698.5 801.5 L1704 807.3 L1709.5 801.5" stroke="#fff" stroke-width="1.5" /><rect x="1728.8" y="794.8" width="18" height="17.2" rx="1.6" stroke="#fff" stroke-width="1.7"/><path d="M1737.8 795 V812" stroke="#fff" stroke-width="1.7" /><path d="M1764 797 H1780.8 M1769.6 796.8 V794.2 Q1769.6 793.4 1770.4 793.4 H1774.4 Q1775.2 793.4 1775.2 794.2 V796.8 M1766.2 797.2 V810.8 Q1766.2 812 1767.4 812 H1777.4 Q1778.6 812 1778.6 810.8 V797.2 M1770 800.5 V808.8 M1774.8 800.5 V808.8" stroke="#fff" stroke-width="1.7" /><circle cx="1801" cy="803.8" r="1.9" fill="#fff" stroke="none"/><circle cx="1808.7" cy="803.8" r="1.9" fill="#fff" stroke="none"/><circle cx="1816.4" cy="803.8" r="1.9" fill="#fff" stroke="none"/><path d="M1839.5 806.3 L1846.6 798.8 L1853.7 806.3" stroke="#fff" stroke-width="1.7" /><path d="M1879.3 796.6 L1891.8 809 M1891.8 796.6 L1879.3 809" stroke="#fff" stroke-width="1.7" stroke-linecap="butt"/><path d="M19.5 1069.8 L25.6 1063.8 L19.5 1057.8 M32 1053.6 L26.6 1058.8 L32 1064" stroke="#fff" stroke-width="1.5" stroke-linecap="butt"/><circle cx="73.35" cy="1062.3" r="8.6" stroke="#fff" stroke-width="1.6"/><path d="M69.6 1058.5 L77.1 1066 M77.1 1058.5 L69.6 1066" stroke="#fff" stroke-width="1.6" stroke-linecap="butt"/><path d="M114.05 1054.10 L122.50 1069.20 H105.60 Z" stroke="#fff" stroke-width="1.6" stroke-linejoin="miter"/><path d="M114.05 1059.65 V1064.32" stroke="#fff" stroke-width="2.0" stroke-linecap="butt"/><rect x="112.85" y="1065.66" width="2.4" height="2.4" fill="#fff" stroke="none"/><circle cx="1343" cy="1061.8" r="7.2" stroke="#fff" stroke-width="1.7"/><path d="M1343 1058 V1065.6 M1339.2 1061.8 H1346.8" stroke="#fff" stroke-width="1.7" stroke-linecap="butt"/><path d="M1348.3 1067.1 L1354.2 1071" stroke="#fff" stroke-width="1.8" /><rect x="1833.82" y="1053.97" width="7.57" height="7.92" rx="3.34" stroke="#fff" stroke-width="1.9"/><rect x="1842.62" y="1053.97" width="7.57" height="7.92" rx="3.34" stroke="#fff" stroke-width="1.9"/><path d="M1834.96 1061.98 H1849.04 C1851.68 1061.98 1852.65 1064.44 1852.65 1066.64 C1852.65 1070.16 1848.16 1072.10 1842.00 1072.10 C1835.84 1072.10 1831.35 1070.16 1831.35 1066.64 C1831.35 1064.44 1832.32 1061.98 1834.96 1061.98 Z" fill="#fff" stroke="none" /><path d="M1835.58 1062.86 H1848.42 V1068.22 C1848.42 1069.54 1845.96 1070.07 1842.00 1070.07 C1838.04 1070.07 1835.58 1069.54 1835.58 1068.22 Z" fill="#000" stroke="none" /><rect x="1838.57" y="1063.91" width="1.94" height="4.05" rx="0.97" fill="#fff" stroke="none"/><rect x="1843.50" y="1063.91" width="1.94" height="4.05" rx="0.97" fill="#fff" stroke="none"/><path d="M1879.6 1068.4 H1894.5 L1892.9 1065.2 V1060.2 C1892.9 1056 1890.3 1053.8 1887.05 1053.8 C1883.8 1053.8 1881.2 1056 1881.2 1060.2 V1065.2 Z" stroke="#fff" stroke-width="1.6" /><path d="M1885.1 1068.8 A1.95 1.95 0 0 0 1889 1068.8" stroke="#fff" stroke-width="1.5" /><path d="M845 1026.3 L851.9 1030 V1043 Q851.9 1050 858.9 1050 H886.1 Q893.1 1050 893.1 1043 V1026.3 H900 V1047 Q900 1056.9 890 1056.9 H855 Q845 1056.9 845 1047 Z" fill="#555555" stroke="none" /><path d="M866.25 1012.55 L872.45 1018.75 L866.25 1024.95 L860.05 1018.75 Z" fill="#555555" stroke="none" /><path d="M881.25 1011.9 L887.45 1018.1 L881.25 1024.3 L875.05 1018.1 Z" fill="#555555" stroke="none" /><path d="M1052 1011.5 L1058.2 1017.7 L1052 1023.9000000000001 L1045.8 1017.7 Z" fill="#555555" stroke="none" /><path d="M903.4 1015.9 L910.9 1011.9 V1043 Q910.9 1049.3 917 1049.3 H927.5 Q933.75 1049.3 933.75 1043 V1029.7 L941 1026.9 V1049.3 H953.4 V1029.4 L960.5 1026.8 V1043 Q960.5 1049.3 966.7 1049.3 Q972.9 1049.3 972.9 1043 V1029.7 L980.1 1026.8 V1049.3 H1074.5 V1056.8 H915 Q903.4 1056.8 903.4 1045 Z" fill="#555555" stroke="none" /><path d="M989.5 1011.8 H1019.8 V1019 H997.3 V1033 H989.5 Z" fill="#555555" stroke="none" /><path d="M989.8 1041.5 A16 16 0 1 1 1005.8 1057.5 V1049.5 A8 8 0 1 0 997.8 1041.5 Z" fill="#555555" stroke="#000" stroke-width="1.6"/><path d="M989.8 1041.6 H998 V1049.3 H989.8 Z" fill="#555555" stroke="none" /><path d="M1003.2 1010 H1005.8 V1058 H1003.2 Z" fill="#000" stroke="none" /><path d="M1036.4 1033.3 C1041 1028.5 1047 1026.2 1054 1026.2 C1066 1026.2 1074.5 1035.5 1074.5 1048 V1056.8 H1065.7 V1048 C1065.7 1039.5 1060.5 1033.1 1053.5 1033.1 C1049 1033.1 1044.5 1035.3 1041.2 1038.6 Z" fill="#555555" stroke="none" /><rect x="0" y="1046" width="1920" height="1" fill="#6FC3DF" stroke="none"/><clipPath id="wmc"><path d="M845 1026.3 L851.9 1030 V1043 Q851.9 1050 858.9 1050 H886.1 Q893.1 1050 893.1 1043 V1026.3 H900 V1047 Q900 1056.9 890 1056.9 H855 Q845 1056.9 845 1047 Z"/><path d="M866.25 1012.55 L872.45 1018.75 L866.25 1024.95 L860.05 1018.75 Z"/><path d="M881.25 1011.9 L887.45 1018.1 L881.25 1024.3 L875.05 1018.1 Z"/><path d="M1052 1011.5 L1058.2 1017.7 L1052 1023.9000000000001 L1045.8 1017.7 Z"/><path d="M903.4 1015.9 L910.9 1011.9 V1043 Q910.9 1049.3 917 1049.3 H927.5 Q933.75 1049.3 933.75 1043 V1029.7 L941 1026.9 V1049.3 H953.4 V1029.4 L960.5 1026.8 V1043 Q960.5 1049.3 966.7 1049.3 Q972.9 1049.3 972.9 1043 V1029.7 L980.1 1026.8 V1049.3 H1074.5 V1056.8 H915 Q903.4 1056.8 903.4 1045 Z"/><path d="M989.5 1011.8 H1019.8 V1019 H997.3 V1033 H989.5 Z"/><path d="M1036.4 1033.3 C1041 1028.5 1047 1026.2 1054 1026.2 C1066 1026.2 1074.5 1035.5 1074.5 1048 V1056.8 H1065.7 V1048 C1065.7 1039.5 1060.5 1033.1 1053.5 1033.1 C1049 1033.1 1044.5 1035.3 1041.2 1038.6 Z"/><path d="M989.8 1041.5 A16 16 0 1 1 1005.8 1057.5 V1049.5 A8 8 0 1 0 997.8 1041.5 Z"/></clipPath><rect x="840" y="1046" width="240" height="1" fill="#96cbe0" stroke="none" clip-path="url(#wmc)"/><rect x="1003.2" y="1046" width="2.6" height="1" fill="#6FC3DF" stroke="none"/><g stroke="none" opacity="0.5"><rect x="1787" y="138" width="9" height="1.2" fill="#5a8fbf"/><rect x="1797" y="138" width="5" height="1.2" fill="#a0a0a0"/><rect x="1787" y="140" width="5" height="1.2" fill="#5a8fbf"/><rect x="1793" y="140" width="10" height="1.2" fill="#b08070"/><rect x="1787" y="142" width="6" height="1.2" fill="#5a8fbf"/><rect x="1789" y="144" width="5" height="1.2" fill="#5a8fbf"/><rect x="1795" y="144" width="15" height="1.2" fill="#b08070"/><rect x="1811" y="144" width="2" height="1.2" fill="#a0a0a0"/><rect x="1789" y="146" width="5" height="1.2" fill="#5a8fbf"/><rect x="1795" y="146" width="15" height="1.2" fill="#b08070"/><rect x="1811" y="146" width="28" height="1.2" fill="#b08070"/><rect x="1840" y="146" width="18" height="1.2" fill="#b08070"/><rect x="1859" y="146" width="2" height="1.2" fill="#a0a0a0"/><rect x="1789" y="148" width="11" height="1.2" fill="#5a8fbf"/><rect x="1801" y="148" width="13" height="1.2" fill="#a0a0a0"/><rect x="1789" y="150" width="5" height="1.2" fill="#5a8fbf"/><rect x="1795" y="150" width="16" height="1.2" fill="#b08070"/><rect x="1812" y="150" width="16" height="1.2" fill="#b08070"/><rect x="1829" y="150" width="2" height="1.2" fill="#a0a0a0"/><rect x="1789" y="152" width="7" height="1.2" fill="#5a8fbf"/><rect x="1797" y="152" width="15" height="1.2" fill="#b08070"/><rect x="1813" y="152" width="15" height="1.2" fill="#a0a0a0"/><rect x="1787" y="154" width="7" height="1.2" fill="#5a8fbf"/><rect x="1787" y="156" width="6" height="1.2" fill="#5a8fbf"/><rect x="1789" y="158" width="8" height="1.2" fill="#5a8fbf"/><rect x="1791" y="160" width="4" height="1.2" fill="#5a8fbf"/><rect x="1796" y="160" width="18" height="1.2" fill="#b08070"/><rect x="1793" y="162" width="3" height="1.2" fill="#5a8fbf"/><rect x="1797" y="162" width="17" height="1.2" fill="#b08070"/><rect x="1815" y="162" width="10" height="1.2" fill="#a0a0a0"/><rect x="1793" y="164" width="5" height="1.2" fill="#5a8fbf"/><rect x="1795" y="166" width="4" height="1.2" fill="#5a8fbf"/><rect x="1797" y="168" width="6" height="1.2" fill="#5a8fbf"/><rect x="1804" y="168" width="28" height="1.2" fill="#b08070"/><rect x="1797" y="170" width="6" height="1.2" fill="#5a8fbf"/><rect x="1804" y="170" width="34" height="1.2" fill="#b08070"/><rect x="1797" y="172" width="6" height="1.2" fill="#5a8fbf"/><rect x="1804" y="172" width="32" height="1.2" fill="#b08070"/><rect x="1795" y="174" width="5" height="1.2" fill="#5a8fbf"/><rect x="1793" y="176" width="6" height="1.2" fill="#5a8fbf"/><rect x="1791" y="178" width="6" height="1.2" fill="#5a8fbf"/><rect x="1789" y="180" width="9" height="1.2" fill="#5a8fbf"/><rect x="1789" y="184" width="8" height="1.2" fill="#5a8fbf"/><rect x="1798" y="184" width="10" height="1.2" fill="#b08070"/><rect x="1791" y="186" width="4" height="1.2" fill="#5a8fbf"/><rect x="1796" y="186" width="18" height="1.2" fill="#b08070"/><rect x="1793" y="188" width="10" height="1.2" fill="#5a8fbf"/><rect x="1804" y="188" width="3" height="1.2" fill="#a0a0a0"/><rect x="1808" y="188" width="9" height="1.2" fill="#a0a0a0"/><rect x="1793" y="190" width="11" height="1.2" fill="#5a8fbf"/><rect x="1805" y="190" width="9" height="1.2" fill="#a0a0a0"/><rect x="1815" y="190" width="1" height="1.2" fill="#a0a0a0"/><rect x="1817" y="190" width="12" height="1.2" fill="#a0a0a0"/><rect x="1791" y="192" width="6" height="1.2" fill="#5a8fbf"/><rect x="1789" y="194" width="10" height="1.2" fill="#5a8fbf"/><rect x="1789" y="198" width="8" height="1.2" fill="#5a8fbf"/><rect x="1798" y="198" width="11" height="1.2" fill="#b08070"/><rect x="1791" y="200" width="4" height="1.2" fill="#5a8fbf"/><rect x="1796" y="200" width="18" height="1.2" fill="#b08070"/><rect x="1793" y="202" width="9" height="1.2" fill="#5a8fbf"/><rect x="1803" y="202" width="7" height="1.2" fill="#a0a0a0"/><rect x="1793" y="204" width="6" height="1.2" fill="#5a8fbf"/><rect x="1800" y="204" width="1" height="1.2" fill="#a0a0a0"/><rect x="1802" y="204" width="10" height="1.2" fill="#a0a0a0"/><rect x="1813" y="204" width="9" height="1.2" fill="#a0a0a0"/><rect x="1823" y="204" width="3" height="1.2" fill="#a0a0a0"/><rect x="1827" y="204" width="5" height="1.2" fill="#a0a0a0"/><rect x="1833" y="204" width="8" height="1.2" fill="#a0a0a0"/><rect x="1842" y="204" width="5" height="1.2" fill="#a0a0a0"/><rect x="1848" y="204" width="3" height="1.2" fill="#a0a0a0"/><rect x="1852" y="204" width="10" height="1.2" fill="#a0a0a0"/><rect x="1863" y="204" width="9" height="1.2" fill="#a0a0a0"/><rect x="1873" y="204" width="1" height="1.2" fill="#a0a0a0"/><rect x="1875" y="204" width="10" height="1.2" fill="#a0a0a0"/><rect x="1886" y="204" width="2" height="1.2" fill="#a0a0a0"/><rect x="1889" y="204" width="5" height="1.2" fill="#a0a0a0"/><rect x="1895" y="204" width="3" height="1.2" fill="#a0a0a0"/><rect x="1791" y="206" width="6" height="1.2" fill="#5a8fbf"/><rect x="1789" y="208" width="10" height="1.2" fill="#5a8fbf"/><rect x="1789" y="212" width="8" height="1.2" fill="#5a8fbf"/><rect x="1798" y="212" width="14" height="1.2" fill="#b08070"/><rect x="1791" y="214" width="4" height="1.2" fill="#5a8fbf"/><rect x="1796" y="214" width="18" height="1.2" fill="#b08070"/><rect x="1793" y="216" width="17" height="1.2" fill="#5a8fbf"/><rect x="1793" y="218" width="4" height="1.2" fill="#5a8fbf"/><rect x="1798" y="218" width="21" height="1.2" fill="#b08070"/><rect x="1795" y="220" width="4" height="1.2" fill="#5a8fbf"/><rect x="1800" y="220" width="16" height="1.2" fill="#b08070"/><rect x="1797" y="222" width="11" height="1.2" fill="#5a8fbf"/><rect x="1809" y="222" width="8" height="1.2" fill="#a0a0a0"/><rect x="1797" y="224" width="9" height="1.2" fill="#5a8fbf"/><rect x="1807" y="224" width="7" height="1.2" fill="#a0a0a0"/><rect x="1815" y="224" width="4" height="1.2" fill="#a0a0a0"/><rect x="1820" y="224" width="4" height="1.2" fill="#a0a0a0"/><rect x="1825" y="224" width="10" height="1.2" fill="#a0a0a0"/><rect x="1836" y="224" width="11" height="1.2" fill="#a0a0a0"/><rect x="1795" y="226" width="6" height="1.2" fill="#5a8fbf"/><rect x="1795" y="228" width="4" height="1.2" fill="#5a8fbf"/><rect x="1800" y="228" width="16" height="1.2" fill="#b08070"/><rect x="1797" y="230" width="11" height="1.2" fill="#5a8fbf"/><rect x="1809" y="230" width="8" height="1.2" fill="#a0a0a0"/><rect x="1797" y="232" width="12" height="1.2" fill="#5a8fbf"/><rect x="1810" y="232" width="8" height="1.2" fill="#a0a0a0"/><rect x="1819" y="232" width="5" height="1.2" fill="#a0a0a0"/><rect x="1825" y="232" width="6" height="1.2" fill="#a0a0a0"/><rect x="1832" y="232" width="3" height="1.2" fill="#a0a0a0"/><rect x="1836" y="232" width="3" height="1.2" fill="#a0a0a0"/><rect x="1840" y="232" width="7" height="1.2" fill="#a0a0a0"/><rect x="1795" y="234" width="6" height="1.2" fill="#5a8fbf"/><rect x="1793" y="236" width="6" height="1.2" fill="#5a8fbf"/><rect x="1791" y="238" width="6" height="1.2" fill="#5a8fbf"/><rect x="1789" y="240" width="10" height="1.2" fill="#5a8fbf"/><rect x="1789" y="244" width="8" height="1.2" fill="#5a8fbf"/><rect x="1798" y="244" width="13" height="1.2" fill="#b08070"/><rect x="1791" y="246" width="4" height="1.2" fill="#5a8fbf"/><rect x="1796" y="246" width="18" height="1.2" fill="#b08070"/><rect x="1793" y="248" width="16" height="1.2" fill="#5a8fbf"/><rect x="1793" y="250" width="9" height="1.2" fill="#5a8fbf"/><rect x="1803" y="250" width="2" height="1.2" fill="#5a8fbf"/><rect x="1806" y="250" width="55" height="1.2" fill="#b08070"/><rect x="1791" y="252" width="6" height="1.2" fill="#5a8fbf"/><rect x="1789" y="254" width="10" height="1.2" fill="#5a8fbf"/><rect x="1789" y="258" width="8" height="1.2" fill="#5a8fbf"/><rect x="1791" y="260" width="4" height="1.2" fill="#5a8fbf"/><rect x="1796" y="260" width="18" height="1.2" fill="#b08070"/><rect x="1793" y="262" width="9" height="1.2" fill="#5a8fbf"/><rect x="1803" y="262" width="4" height="1.2" fill="#a0a0a0"/><rect x="1808" y="262" width="4" height="1.2" fill="#a0a0a0"/><rect x="1813" y="262" width="6" height="1.2" fill="#a0a0a0"/><rect x="1820" y="262" width="3" height="1.2" fill="#a0a0a0"/><rect x="1824" y="262" width="6" height="1.2" fill="#a0a0a0"/><rect x="1831" y="262" width="13" height="1.2" fill="#a0a0a0"/><rect x="1791" y="264" width="6" height="1.2" fill="#5a8fbf"/><rect x="1789" y="266" width="9" height="1.2" fill="#5a8fbf"/><rect x="1787" y="268" width="7" height="1.2" fill="#5a8fbf"/><rect x="1787" y="270" width="7" height="1.2" fill="#5a8fbf"/></g>
</svg>
</body></html>
